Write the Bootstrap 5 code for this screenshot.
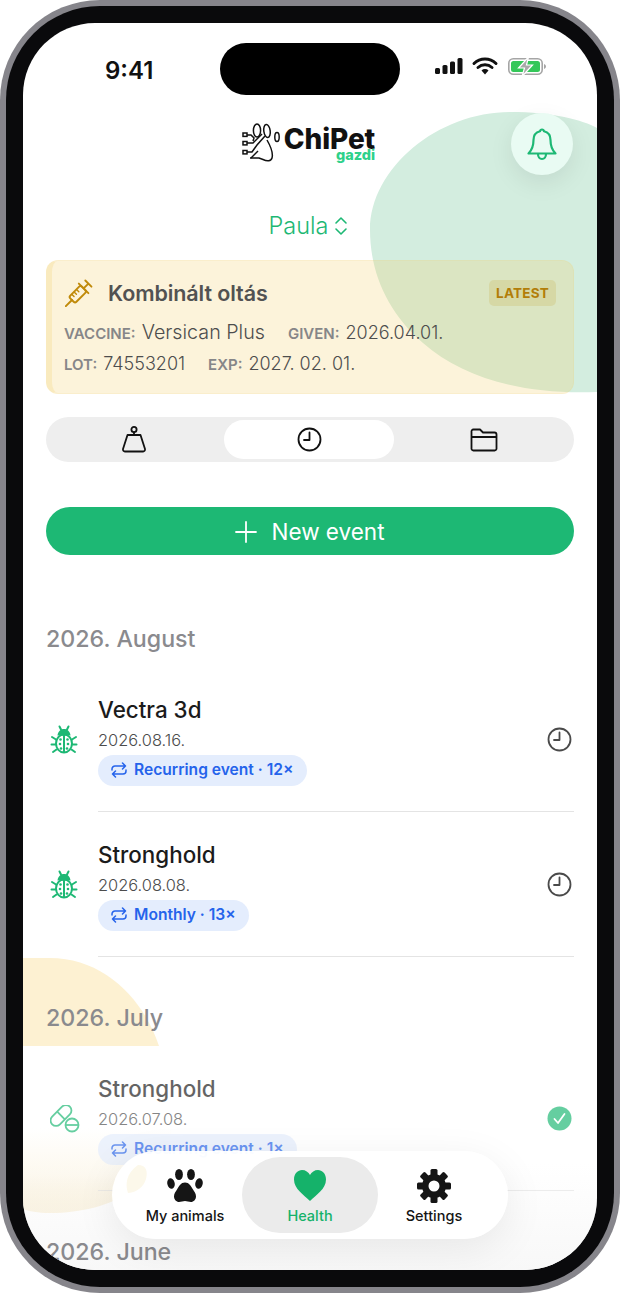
<!DOCTYPE html>
<html lang="en">
<head>
  <meta charset="UTF-8" />
  <title>ChiPet gazdi</title>
  <link href="https://cdn.jsdelivr.net/npm/bootstrap@5.3.0/dist/css/bootstrap.min.css" rel="stylesheet">
  <style>
    body { background: #fff; font-family: "Inter", "Liberation Sans", sans-serif; }
    .phone-frame { width: 620px; height: 1293px; padding: 6px; background: #86858b; border-radius: 100px; }
    .phone-bezel { height: 100%; padding: 17px; background: #0a0a0c; border-radius: 94px; }
    .phone-screen { position: relative; height: 100%; overflow: hidden; background: #fff; border-radius: 72px; padding: 0 23px; }
    .blob-layer { position: absolute; left: 0; top: 0; width: 574px; height: 1247px; }
    .screen-flow { position: relative; }

    .status-row { height: 100px; margin: 0 -23px; padding: 30px 50px 0 82px; }
    .status-time { font-size: 24px; font-weight: 600; line-height: 32px; color: #111; padding-top: 2px; }
    .island { position: absolute; left: 174px; top: 20px; width: 180px; height: 52px; background: #000; border-radius: 26px; }

    .logo-row { height: 40px; padding-right: 3px; }
    .logo-name { font-size: 28px; font-weight: 800; line-height: 22px; color: #111; letter-spacing: -.1px; margin-top: 5px; }
    .logo-sub { font-size: 14.5px; font-weight: 800; line-height: 10px; color: #2ed18a; text-align: right; }
    .bell-btn { position: absolute; left: 488px; top: 90px; width: 62px; height: 62px; border-radius: 50%; background: #e9fbf3; box-shadow: 0 8px 24px rgba(0,0,0,.08); }

    .pet-picker { margin-top: 48px; height: 30px; color: #1db874; font-size: 23.5px; font-weight: 300; line-height: 30px; gap: 6px; padding-right: 3px; }

    .vax-card { margin-top: 19px; height: 134px; padding: 18px 17px 0 12px; background: rgba(243,207,107,.25); border: 1px solid rgba(243,207,107,.12); border-left: 6px solid rgba(243,207,107,.25); border-radius: 12px; }
    .vax-head { height: 27px; }
    .vax-syringe { margin-left: 1px; }
    .vax-title { font-size: 21.5px; font-weight: 600; color: #525252; line-height: 26px; margin-left: 14px; letter-spacing: -.1px; }
    .vax-tag { width: 67px; height: 26px; border-radius: 5px; background: rgba(190,150,20,.16); color: #b27d08; font-size: 13.5px; font-weight: 700; line-height: 26px; text-align: center; letter-spacing: .2px; }
    .vax-line { height: 32px; font-size: 18px; font-weight: 300; color: #4d4d4d; line-height: 32px; white-space: nowrap; }
    .vax-line.first { margin-top: 10px; }
    .vax-line b { font-size: 15px; font-weight: 600; color: #868688; margin-right: 6px; }
    .vax-line span + b { margin-left: 23px; }
    .vax-wide { font-size: 19.7px; }

    .seg-track { margin-top: 23px; height: 45px; padding: 3px; gap: 5px; background: #eeeeee; border-radius: 23px; }
    .seg-cell { height: 39px; width: 170px; border-radius: 20px; }
    .seg-cell.is-on { background: #fff; }

    .new-btn { margin-top: 45px; height: 48px; width: 100%; border-radius: 24px; background: #1db874; border: 0; color: #fff; font-size: 22.5px; font-weight: 400; gap: 14px; padding-top: 8px; }
    .new-btn:hover { background: #1db874; color: #fff; }

    .month-head { height: 32px; line-height: 32px; font-size: 23.2px; font-weight: 500; color: #8a8a8e; margin: 0 0 12px 0; }
    .month-head.first { margin-top: 68px; }
    .month-head.later { margin-top: 45px; }
    .ev-row { height: 145px; }
    .ev-icon { width: 52px; padding-left: 4px; flex: none; }
    .ev-main { height: 145px; border-bottom: 1px solid #e4e4e4; }
    .ev-text { padding-top: 4px; }
    .ev-name { font-size: 22.4px; font-weight: 500; line-height: 26px; color: #1b1b1b; }
    .ev-date { font-size: 16.4px; font-weight: 300; line-height: 20px; color: #4c4c4c; margin-top: 7px; }
    .repeat-pill { margin-top: 5px; height: 31px; padding: 0 13px; gap: 7px; background: #e4edfd; color: #2563eb; font-size: 15.6px; font-weight: 600; border-radius: 16px; }
    .ev-faded { opacity: .68; }
    .ev-end { margin-right: 2px; }

    .bottom-nav { position: absolute; left: 89px; top: 1128px; width: 396px; height: 88px; padding: 6px 0 6px 6px; background: rgba(255,255,255,.96); border-radius: 44px; box-shadow: 0 10px 40px rgba(0,0,0,.08); }
    .nav-tint { position: absolute; left: 12px; top: 14px; }
    .nav-cell { position: relative; height: 76px; font-size: 14.5px; font-weight: 500; color: #151515; line-height: 18px; padding-top: 11px; }
    .nav-cell svg { margin-bottom: 3px; }
    .nav-cell.is-on { background: #ebebeb; border-radius: 38px; color: #15b26a; }
    .nav-a { width: 124px; padding-left: 10px; }
    .nav-b { width: 136px; }
    .nav-c { width: 130px; padding-right: 18px; }
  </style>
</head>
<body class="m-0">
  <div class="phone-frame">
    <div class="phone-bezel">
      <div class="phone-screen">

        <!-- decorative background shapes -->
        <svg class="blob-layer" viewBox="0 0 574 1247">
          <defs>
            <linearGradient id="yellowFade" x1="0" y1="0" x2="0" y2="1">
              <stop offset="0" stop-color="#f9edd0" stop-opacity="0" />
              <stop offset=".55" stop-color="#f9edd0" stop-opacity=".35" />
              <stop offset="1" stop-color="#f9edd0" stop-opacity="1" />
            </linearGradient>
            <linearGradient id="floorFade" x1="0" y1="0" x2="0" y2="1">
              <stop offset="0" stop-color="#f8f8f8" stop-opacity="0" />
              <stop offset="1" stop-color="#f8f8f8" stop-opacity="1" />
            </linearGradient>
          </defs>
          <path d="M347 207C347 145 415 89 487 89C530 89 560 97 574 105V369C500 372 440 355 400 320C365 290 347 250 347 207Z" fill="#d3eddf" />
          <path d="M0 935H27C80 935 120 975 136 1023H0Z" fill="#fdf1d2" />
          <path d="M0 1105H149C142 1160 90 1190 27 1190C15 1190 5 1188 0 1186Z" fill="url(#yellowFade)" />
          <rect x="0" y="1140" width="574" height="107" fill="url(#floorFade)" />
        </svg>

        <div class="screen-flow">
          <div class="status-row d-flex justify-content-between align-items-start">
            <div class="status-time">9:41</div>
            <div class="island"></div>
            <svg width="112" height="20" viewBox="0 0 112 20" class="mt-1">
              <g fill="#111">
                <rect x="0" y="11" width="5" height="6" rx="1.5" /><rect x="7.5" y="8" width="5" height="9" rx="1.5" /><rect x="15" y="4.5" width="5" height="12.5" rx="1.5" /><rect x="22.5" y="1" width="5" height="16" rx="1.5" />
              </g>
              <path d="M39 6.500a16 16 0 0 1 22 0M43 10.500a10.500 10.500 0 0 1 14 0" fill="none" stroke="#111" stroke-width="3" stroke-linecap="round" />
              <path d="M46.500 13.500a5 5 0 0 1 7 0L50 17.500Z" fill="#111" />
              <rect x="73.800" y="1.800" width="33.400" height="15.400" rx="4.500" fill="none" stroke="#a5a5a5" stroke-width="1.600" />
              <rect x="76" y="4" width="29" height="11" rx="2.500" fill="#34c759" />
              <path d="M109 7v5c1.200-.4 2-1.400 2-2.500S110.200 7.400 109 7Z" fill="#a5a5a5" />
              <path d="M93.500 0 83.500 11h6L87 19.500 97.500 8h-6Z" fill="#a9a9a9" stroke="#fff" stroke-width="1.200" />
            </svg>
          </div>

          <div class="logo-row d-flex justify-content-center align-items-start">
            <svg width="38" height="40" viewBox="0 0 38 40" fill="none" stroke="#111" stroke-width="1.500" class="me-1">
              <ellipse cx="15" cy="7.500" rx="3.600" ry="6.500" /><ellipse cx="25" cy="8" rx="3.200" ry="6.500" transform="rotate(-8 25 8)" /><ellipse cx="35" cy="14" rx="2.200" ry="4.500" />
              <rect x="1" y="10" width="4" height="3.400" /><rect x="1" y="18.500" width="4" height="3.400" /><rect x="1" y="27.500" width="4" height="3.400" />
              <path d="M5 12h4l3 3-1 3M5 20h6l9-9M5 29h5l5-7 8-9M8 35h9l4 1.500c4 2 8 2 9-1.500s-1-11-5-18" />
              <path d="M9 35l7-7" />
            </svg>
            <div>
              <div class="logo-name">ChiPet</div>
              <div class="logo-sub">gazdi</div>
            </div>
          </div>

          <div class="pet-picker d-flex justify-content-center align-items-center">
            <span>Paula</span>
            <svg width="14" height="20" viewBox="0 0 14 20" fill="none" stroke="#1db874" stroke-width="1.600" stroke-linecap="round" stroke-linejoin="round"><path d="M2 7l5-5 5 5M2 13l5 5 5-5" /></svg>
          </div>

          <div class="vax-card">
            <div class="vax-head d-flex align-items-center justify-content-between">
              <div class="d-flex align-items-center">
                <svg class="vax-syringe" width="29" height="29" viewBox="0 0 30 30" fill="none" stroke="#c08a0a" stroke-width="2" stroke-linecap="round" stroke-linejoin="round">
                  <g transform="rotate(-45 15 15)">
                    <path d="M-5 15H4" />
                    <rect x="4" y="10.500" width="17" height="9" rx="2" />
                    <path d="M21 15h7M28 10.500v9M21 8v14" />
                    <path d="M8 11v3M11.500 11v3M15 11v3" stroke-width="1.500" />
                  </g>
                </svg>
                <div class="vax-title">Kombinált oltás</div>
              </div>
              <div class="vax-tag">LATEST</div>
            </div>
            <div class="vax-line first"><b>VACCINE:</b><span class="vax-wide">Versican Plus</span><b>GIVEN:</b><span>2026.04.01.</span></div>
            <div class="vax-line"><b>LOT:</b><span>74553201</span><b>EXP:</b><span>2027. 02. 01.</span></div>
          </div>

          <div class="seg-track d-flex">
            <div class="seg-cell d-flex align-items-center justify-content-center">
              <svg width="26" height="27" viewBox="0 0 26 27" fill="none" stroke="#111" stroke-width="1.800" stroke-linejoin="round"><circle cx="13" cy="3.500" r="2.600" /><path d="M13 6v3M6.500 9h13l4.500 14a2 2 0 0 1-2 2.500H4a2 2 0 0 1-2-2.500Z" /></svg>
            </div>
            <div class="seg-cell is-on d-flex align-items-center justify-content-center">
              <svg width="25" height="25" viewBox="0 0 25 25" fill="none" stroke="#111" stroke-width="1.800" stroke-linecap="round" stroke-linejoin="round"><circle cx="12.500" cy="12.500" r="11" /><path d="M12.500 5.500v7.500H7" /></svg>
            </div>
            <div class="seg-cell d-flex align-items-center justify-content-center">
              <svg width="28" height="24" viewBox="0 0 28 24" fill="none" stroke="#111" stroke-width="1.800" stroke-linejoin="round"><path d="M1.500 4a2 2 0 0 1 2-2.500H10l3 3h11.500a2 2 0 0 1 2 2V20a2 2 0 0 1-2 2.500h-21a2 2 0 0 1-2-2.500ZM1.500 9h25" /></svg>
            </div>
          </div>

          <button class="new-btn btn d-flex align-items-center justify-content-center">
            <svg width="22" height="22" viewBox="0 0 22 22" stroke="#fff" stroke-width="1.800" stroke-linecap="round"><path d="M11 1v20M1 11h20" /></svg>
            <span>New event</span>
          </button>

          <div class="month-head first">2026. August</div>
          <div class="ev-row d-flex align-items-center">
            <div class="ev-icon"><svg width="28" height="30" viewBox="0 0 28 30"><use href="#bug" /></svg></div>
            <div class="ev-main flex-grow-1 d-flex align-items-center justify-content-between">
              <div class="ev-text">
                <div class="ev-name">Vectra 3d</div>
                <div class="ev-date">2026.08.16.</div>
                <div class="repeat-pill d-inline-flex align-items-center"><svg width="16" height="16" viewBox="0 0 16 16"><use href="#repeat" /></svg>Recurring event · 12×</div>
              </div>
              <div class="ev-end"><svg width="25" height="25" viewBox="0 0 25 25"><use href="#clock" /></svg></div>
            </div>
          </div>
          <div class="ev-row d-flex align-items-center">
            <div class="ev-icon"><svg width="28" height="30" viewBox="0 0 28 30"><use href="#bug" /></svg></div>
            <div class="ev-main flex-grow-1 d-flex align-items-center justify-content-between">
              <div class="ev-text">
                <div class="ev-name">Stronghold</div>
                <div class="ev-date">2026.08.08.</div>
                <div class="repeat-pill d-inline-flex align-items-center"><svg width="16" height="16" viewBox="0 0 16 16"><use href="#repeat" /></svg>Monthly · 13×</div>
              </div>
              <div class="ev-end"><svg width="25" height="25" viewBox="0 0 25 25"><use href="#clock" /></svg></div>
            </div>
          </div>

          <div class="month-head later">2026. July</div>
          <div class="ev-row d-flex align-items-center ev-faded">
            <div class="ev-icon">
              <svg width="30" height="28" viewBox="0 0 30 28" fill="none" stroke="#1db874" stroke-width="1.800">
                <rect x="-1.500" y="5" width="25" height="11" rx="5.500" transform="rotate(-45 11 10.500)" /><path d="M7.200 6.700l7.600 7.600" />
                <circle cx="22" cy="20" r="6.500" /><path d="M15.500 20h13" />
              </svg>
            </div>
            <div class="ev-main flex-grow-1 d-flex align-items-center justify-content-between">
              <div class="ev-text">
                <div class="ev-name">Stronghold</div>
                <div class="ev-date">2026.07.08.</div>
                <div class="repeat-pill d-inline-flex align-items-center"><svg width="16" height="16" viewBox="0 0 16 16"><use href="#repeat" /></svg>Recurring event · 1×</div>
              </div>
              <div class="ev-end">
                <svg width="25" height="25" viewBox="0 0 25 25"><circle cx="12.500" cy="12.500" r="12" fill="#1db874" /><path d="M7.500 13l3.500 4 6.500-9" fill="none" stroke="#fff" stroke-width="1.800" stroke-linecap="round" stroke-linejoin="round" /></svg>
              </div>
            </div>
          </div>

          <div class="month-head later">2026. June</div>
        </div>

        <div class="bell-btn d-flex align-items-center justify-content-center">
          <svg width="32" height="34" viewBox="0 0 32 34" fill="none" stroke="#1db874" stroke-width="2.200" stroke-linecap="round" stroke-linejoin="round">
            <path d="M16 2.500c-1 0-1.800.7-2 1.800C10 5.300 7.500 8.500 7.500 13c0 7-2 10.500-5 13.500h27c-3-3-5-6.500-5-13.500 0-4.500-2.500-7.700-6.500-8.700-.2-1.100-1-1.800-2-1.800Z" />
            <path d="M12 27c0 3 1.700 5 4 5s4-2 4-5" />
          </svg>
        </div>

        <nav class="bottom-nav d-flex">
          <svg class="nav-tint" width="24" height="28" viewBox="0 0 24 28"><path d="M14 0C22 0 24 6 22 14C20 21 14 27 4 28C1 20 2 8 14 0Z" fill="#fcf8ea" /></svg>
          <div class="nav-cell nav-a d-flex flex-column align-items-center">
            <svg width="36" height="36" viewBox="0 0 36 36" fill="#151515">
              <ellipse cx="12" cy="6.500" rx="3.900" ry="5.500" /><ellipse cx="24" cy="6.500" rx="3.900" ry="5.500" /><ellipse cx="4" cy="15.500" rx="3.700" ry="5.300" transform="rotate(-12 4 15.500)" /><ellipse cx="32" cy="15.500" rx="3.700" ry="5.300" transform="rotate(12 32 15.500)" />
              <path d="M18 14.500c-4 0-6 3.500-8 7-1.500 2.500-3 4-3 7 0 3 2.500 5.500 5 5.500 2.200 0 4-1 6-1s3.800 1 6 1c2.500 0 5-2.500 5-5.500 0-3-1.500-4.500-3-7-2-3.500-4-7-8-7Z" />
            </svg>
            <div>My animals</div>
          </div>
          <div class="nav-cell nav-b is-on d-flex flex-column align-items-center">
            <svg width="36" height="36" viewBox="0 0 36 36" fill="#15b26a"><path d="M18 33C12 27 2 21 2 11.500 2 5.500 6 2 10 2c3.500 0 6.500 2 8 5 1.500-3 4.500-5 8-5 4 0 8 3.500 8 9.500C34 21 24 27 18 33Z" /></svg>
            <div>Health</div>
          </div>
          <div class="nav-cell nav-c d-flex flex-column align-items-center">
            <svg width="36" height="36" viewBox="0 0 36 36" fill="#151515">
              <path fill-rule="evenodd" d="M18 6a12 12 0 1 0 0 24 12 12 0 0 0 0-24Zm0 6.500a5.500 5.500 0 1 1 0 11 5.500 5.500 0 0 1 0-11Z" />
              <rect x="14.500" y="1" width="7" height="7" rx="1.500" />
              <rect x="14.500" y="1" width="7" height="7" rx="1.500" transform="rotate(45 18 18)" />
              <rect x="14.500" y="1" width="7" height="7" rx="1.500" transform="rotate(90 18 18)" />
              <rect x="14.500" y="1" width="7" height="7" rx="1.500" transform="rotate(135 18 18)" />
              <rect x="14.500" y="1" width="7" height="7" rx="1.500" transform="rotate(180 18 18)" />
              <rect x="14.500" y="1" width="7" height="7" rx="1.500" transform="rotate(225 18 18)" />
              <rect x="14.500" y="1" width="7" height="7" rx="1.500" transform="rotate(270 18 18)" />
              <rect x="14.500" y="1" width="7" height="7" rx="1.500" transform="rotate(315 18 18)" />
            </svg>
            <div>Settings</div>
          </div>
        </nav>
      </div>
    </div>
  </div>

  <!-- shared icons -->
  <svg width="0" height="0" class="d-block">
    <defs>
      <g id="bug">
        <path d="M7.500 10.500C8 6.500 10.500 4 14 4s6 2.500 6.500 6.500Z" fill="#1db874" />
        <g fill="none" stroke="#1db874" stroke-width="2" stroke-linecap="round">
          <ellipse cx="14" cy="18.500" rx="8" ry="9" /><path d="M14 10v17M9.500 1.500l1.500 3M18.500 1.500l-1.500 3M2 12l4 2.500M26 12l-4 2.500M1.500 19.500h4M26.500 19.500h-4M3 27l3.500-2.500M25 27l-3.500-2.500" />
        </g>
        <g fill="#1db874"><circle cx="10.500" cy="14.500" r="1.300" /><circle cx="17.500" cy="14.500" r="1.300" /><circle cx="10" cy="19" r="1.300" /><circle cx="18" cy="19" r="1.300" /><circle cx="11" cy="23.500" r="1.300" /><circle cx="17" cy="23.500" r="1.300" /></g>
      </g>
      <g id="repeat" fill="none" stroke="#2563eb" stroke-width="1.500" stroke-linecap="round" stroke-linejoin="round">
        <path d="M11.500 1l3 3-3 3M14.500 4H4a3 3 0 0 0-3 3v1M4.500 15l-3-3 3-3M1.500 12H12a3 3 0 0 0 3-3V8" />
      </g>
      <g id="clock" fill="none" stroke="#4a4a4a" stroke-width="1.800" stroke-linecap="round" stroke-linejoin="round">
        <circle cx="12.500" cy="12.500" r="11" /><path d="M12.500 5.500v7.500H7" />
      </g>
    </defs>
  </svg>
</body>
</html>
